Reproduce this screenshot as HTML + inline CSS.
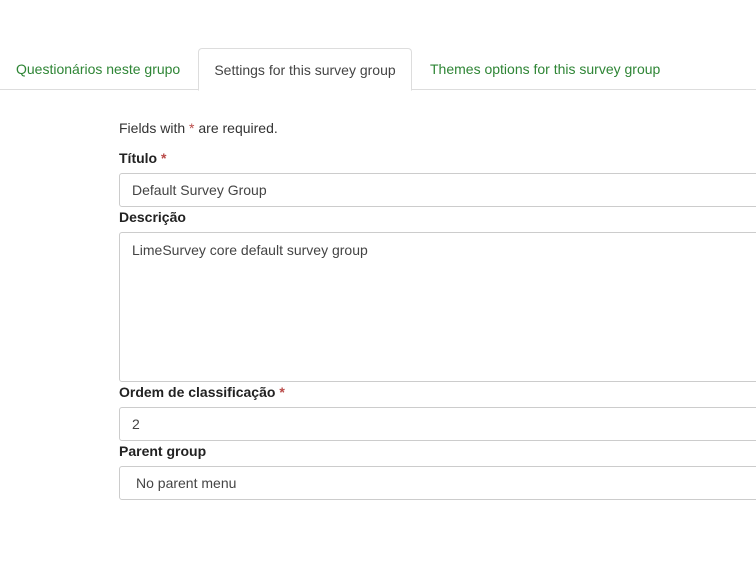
<!DOCTYPE html>
<html><head><style>
body{margin:0;width:756px;height:563px;background:#fff;font-family:"Liberation Sans",sans-serif;font-size:14px;color:#333;position:relative;overflow:hidden}
.a{position:absolute;white-space:nowrap}
.line{position:absolute;left:0;right:0;top:89px;height:1px;background:#ddd}
.tab{position:absolute;top:49px;height:41px;line-height:41px;color:#2e8535}
.act{left:198px;top:48px;width:212px;border:1px solid #ddd;border-bottom:1px solid #fff;border-radius:4px 4px 0 0;background:#fff;color:#444;text-align:center;height:41px;line-height:42px}
.lbl{font-weight:bold;color:#222}
.req{color:#b94a48}
.in{position:absolute;left:119px;width:660px;border:1px solid #ccc;border-radius:3px;background:#fff;color:#444;box-sizing:border-box}
</style></head><body>
<div class="line"></div>
<div class="a tab" style="left:16px">Questionários neste grupo</div>
<div class="a tab act">Settings for this survey group</div>
<div class="a tab" style="left:430px">Themes options for this survey group</div>

<div class="a" style="left:119px;top:120px">Fields with <span class="req">*</span> are required.</div>
<div class="a lbl" style="left:119px;top:150px">Título <span class="req">*</span></div>
<div class="in" style="top:173px;height:34px;padding:8px 12px">Default Survey Group</div>
<div class="a lbl" style="left:119px;top:209px">Descrição</div>
<div class="in" style="top:232px;height:150px;padding:9px 12px">LimeSurvey core default survey group</div>
<div class="a lbl" style="left:119px;top:384px">Ordem de classificação <span class="req">*</span></div>
<div class="in" style="top:407px;height:34px;padding:8px 12px">2</div>
<div class="a lbl" style="left:119px;top:443px">Parent group</div>
<div class="in" style="top:466px;height:34px;padding:8px 16px">No parent menu</div>
</body></html>
